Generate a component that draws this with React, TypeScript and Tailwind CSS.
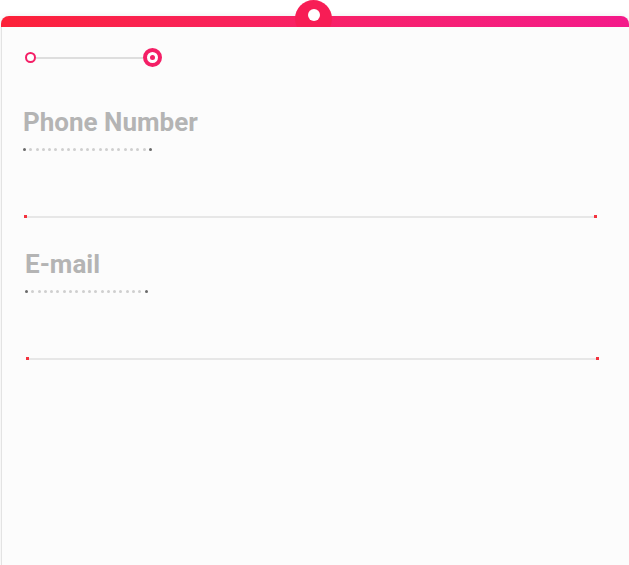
import React from 'react';

const font = { fontFamily: 'Roboto, "Noto Sans", sans-serif' };

const Dots = ({ count }: { count: number }) => (
  <div className="flex items-center gap-[3.3px] h-[4px]">
    {Array.from({ length: count }).map((_, i) => (
      <span
        key={i}
        className={`block w-[3px] h-[3px] rounded-full ${
          i === 0 || i === count - 1 ? 'bg-[#6a6a6a]' : 'bg-[#cfcfcf]'
        }`}
      />
    ))}
  </div>
);

const Field = ({ label, dots, shift }: { label: string; dots: number; shift: boolean }) => (
  <div className={`flex flex-col ${shift ? 'ml-[2px]' : ''}`}>
    <h2 className="text-[26px] leading-[30px] font-bold text-[#b4b4b4]">{label}</h2>
    <div className="mt-[10px]">
      <Dots count={dots} />
    </div>
    {/* input underline */}
    <div className="mt-[64px] ml-[1px] flex items-center w-[573px]">
      <span className="block w-[3px] h-[3px] bg-[#f4333f]" />
      <div className="flex-1 h-[2px] bg-[#e7e7e7]" />
      <span className="block w-[3px] h-[3px] bg-[#f4333f]" />
    </div>
  </div>
);

export default function App() {
  return (
    <div className="relative w-[629px] h-[565px] bg-white pt-[16px] pl-[1px] overflow-hidden" style={font}>
      <div className="relative h-full bg-[#fcfcfc] border-l border-[#e3e3e3] rounded-tl-[8px] rounded-tr-[8px] shadow-[0_0_6px_rgba(0,0,0,0.08)]">
        {/* top gradient bar */}
        <div className="h-[11px] -ml-[1px] rounded-t-[8px] bg-gradient-to-r from-[#fc2138] to-[#f41a8a]" />

        <div className="pl-[21px] pt-[21px]">
          {/* stepper */}
          <div className="flex items-center ml-[2px]">
            <span className="block w-[11px] h-[11px] rounded-full border-2 border-[#f41f66] bg-white" />
            <div className="w-[107px] h-[2px] bg-[#dedede]" />
            <span className="flex items-center justify-center w-[19px] h-[19px] rounded-full border-[4px] border-[#f41f66] bg-white">
              <span className="block w-[5px] h-[5px] rounded-full bg-[#f41f66]" />
            </span>
          </div>

          <div className="mt-[40px] flex flex-col gap-[31px]">
            <Field label="Phone Number" dots={21} shift={false} />
            <Field label="E-mail" dots={20} shift={true} />
          </div>
        </div>
      </div>

      {/* hanger knob, clipped at the bar's bottom edge */}
      <div className="absolute top-0 left-[295px] w-[37px] h-[27px] overflow-hidden">
        <div className="w-[37px] h-[37px] rounded-full bg-[#f71d55] flex justify-center pt-[9px]">
          <span className="block w-[12px] h-[12px] rounded-full bg-white" />
        </div>
      </div>
    </div>
  );
}
